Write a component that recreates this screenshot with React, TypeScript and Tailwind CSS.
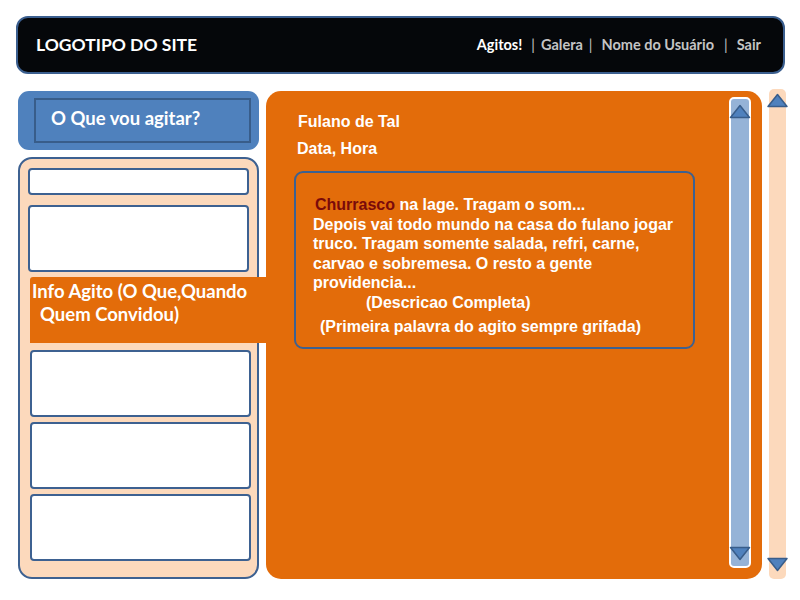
import React from "react";

const Up = ({ className }: { className?: string }) => (
  <svg viewBox="0 0 22 15" className={className}>
    <polygon points="11,1.5 20.5,13.5 1.5,13.5" fill="#4f81bd" stroke="#385d8a" strokeWidth="1.5" strokeLinejoin="round" />
  </svg>
);

const Down = ({ className }: { className?: string }) => (
  <svg viewBox="0 0 22 15" className={className}>
    <polygon points="1.5,1.5 20.5,1.5 11,13.5" fill="#4f81bd" stroke="#385d8a" strokeWidth="1.5" strokeLinejoin="round" />
  </svg>
);

const box = "rounded-[4px] border-2 border-[#3d6191] bg-white";

export default function App() {
  return (
    <div className="relative h-[600px] w-[800px] overflow-hidden bg-white font-['Liberation_Sans',Arial,sans-serif]">
      {/* header */}
      <div className="mx-4 mt-4 flex h-[58px] w-[769px] items-center justify-between rounded-[12px] border-2 border-[#3b5f8f] bg-[#05070a] pl-[18px] pr-[22px]">
        <div className="font-['Lato',sans-serif] text-[17.5px] font-bold text-white">
          LOGOTIPO DO SITE
        </div>
        <div className="flex items-center font-['Lato',sans-serif] text-[14.5px] font-bold text-[#c4c4c4]">
          <span className="text-white">Agitos!</span>
          <span className="ml-[9px] mr-[6px] font-normal">|</span>
          <span>Galera</span>
          <span className="ml-[6px] mr-[9px] font-normal">|</span>
          <span>Nome do Usuário</span>
          <span className="ml-[10px] mr-[9px] font-normal">|</span>
          <span>Sair</span>
        </div>
      </div>

      <div className="mt-[15px] flex">
        {/* left column */}
        <div className="ml-[18px] mt-[2px] flex w-[241px] flex-col">
          <div className="h-[59px] rounded-[11px] bg-[#4f81bd] pb-[7px] pl-[16px] pr-[8px] pt-[7px]">
            <div className="h-full border-2 border-[#385d8a] pl-[15px] pt-[5px] font-['Lato',sans-serif] text-[18.5px] font-bold text-white">
              O Que vou agitar?
            </div>
          </div>

          <div className="mt-[7px] flex h-[422px] flex-col rounded-[14px] border-2 border-[#3d6191] bg-[#fcd9bc] pt-[9px]">
            <div className={`${box} mx-[8px] h-[27px]`} />
            <div className={`${box} mx-[8px] mt-[10px] h-[67px]`} />
            <div className="-mr-[9px] ml-[10px] mt-[5px] h-[66px] rounded-tl-[3px] bg-[#e36c0a] pt-[3px] font-['Lato',sans-serif] text-[18.5px] font-bold leading-[23px] text-white">
              <div className="pl-[2px]">Info Agito (O Que,Quando</div>
              <div className="pl-[10px]">Quem Convidou)</div>
            </div>
            <div className={`${box} ml-[10px] mr-[6px] mt-[7px] h-[67px]`} />
            <div className={`${box} ml-[10px] mr-[6px] mt-[5px] h-[67px]`} />
            <div className={`${box} ml-[10px] mr-[6px] mt-[5px] h-[67px]`} />
          </div>
        </div>

        {/* main panel */}
        <div className="ml-[7px] mt-[2px] flex h-[488px] w-[496px] rounded-[15px] bg-[#e36c0a]">
          <div className="flex-1 pl-[28px] pt-[21px] font-bold text-white">
            <div className="pl-[4px] text-[16px] leading-[19px]">Fulano de Tal</div>
            <div className="mt-[8px] pl-[3px] text-[16px] leading-[19px]">Data, Hora</div>
            <div className="mt-[13px] h-[178px] w-[401px] rounded-[9px] border-2 border-[#3d6191] pl-[17px] pt-[22px] text-[16px] leading-[19.5px]">
              <div>
                <span className="pl-[2px] text-[#7a0a0a]">Churrasco</span> na lage. Tragam o som...
              </div>
              <div>Depois vai todo mundo na casa do fulano jogar</div>
              <div>truco. Tragam somente salada, refri, carne,</div>
              <div>carvao e sobremesa. O resto a gente</div>
              <div>providencia...</div>
              <div className="pl-[53px]">(Descricao Completa)</div>
              <div className="mt-[5px] pl-[7px]">(Primeira palavra do agito sempre grifada)</div>
            </div>
          </div>
          <div className="mr-[11px] mt-[6px] flex h-[471px] w-[22px] flex-col items-center justify-between rounded-[5px] border-2 border-white bg-[#95b3d7] py-[5px]">
            <Up className="-mx-[2px] h-[15px] w-[22px]" />
            <Down className="-mx-[2px] h-[15px] w-[22px]" />
          </div>
        </div>

        {/* outer scroll */}
        <div className="ml-[7px] flex h-[490px] w-[17px] flex-col items-center justify-between rounded-[5px] bg-[#fcd9bc] pb-[7px] pt-[4px]">
          <Up className="-mx-[3px] h-[15px] w-[23px] shrink-0" />
          <Down className="-mx-[3px] h-[15px] w-[23px] shrink-0" />
        </div>
      </div>
    </div>
  );
}
